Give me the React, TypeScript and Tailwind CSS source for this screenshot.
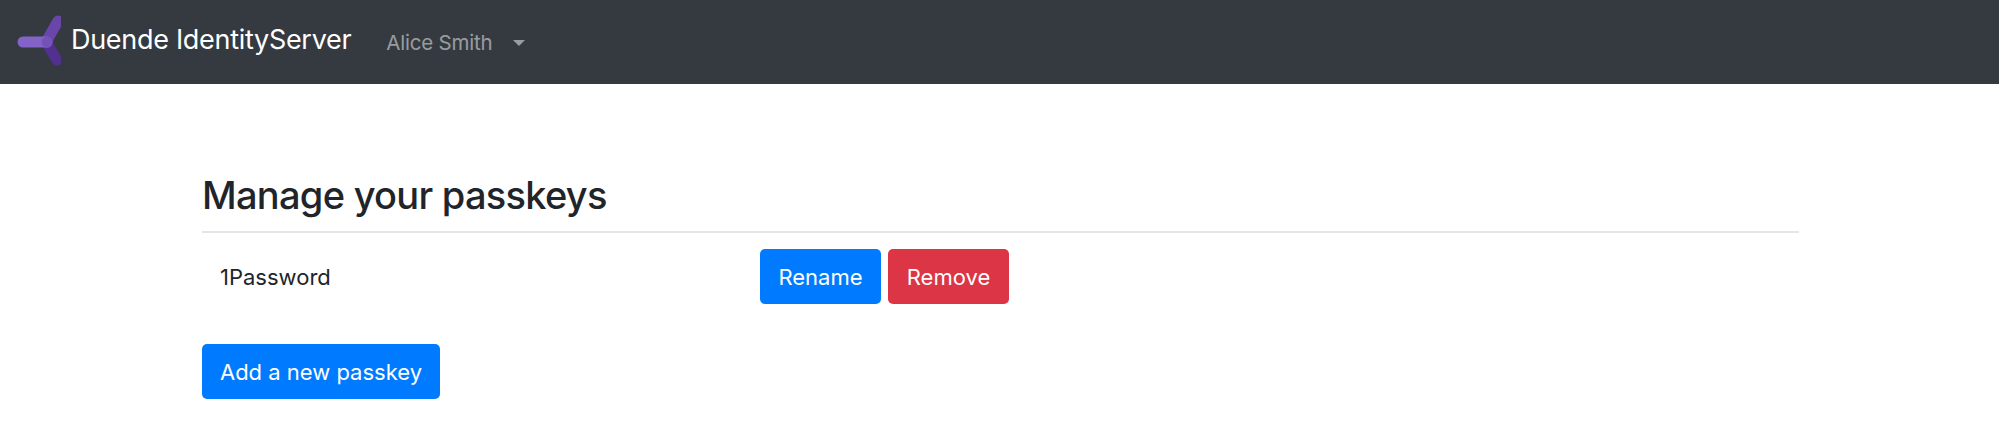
function Logo() {
  return (
    <svg width="44" height="54" viewBox="0 0 44 54" className="shrink-0" fill="none">
      <line x1="29" y1="27" x2="40" y2="45" stroke="#51308f" strokeWidth="11" strokeLinecap="round" />
      <line x1="29" y1="27" x2="41" y2="6" stroke="#6a45aa" strokeWidth="11" strokeLinecap="round" />
      <line x1="6" y1="27" x2="30" y2="27" stroke="#8463c8" strokeWidth="11" strokeLinecap="round" />
      <circle cx="30" cy="27" r="5.5" fill="#7453b8" />
    </svg>
  );
}

export default function App() {
  return (
    <div className="min-h-[445px] bg-white font-['Inter',sans-serif] text-[#212529]">
      {/* Navbar */}
      <nav className="flex h-[84px] items-center bg-[#343a40] pl-[17px]">
        <Logo />
        <span className="mb-[6px] ml-[10px] text-[27px] leading-none tracking-[-0.3px] text-white">Duende IdentityServer</span>
        <span className="ml-[35px] mt-[3px] text-[20.5px] leading-none tracking-[-0.2px] text-white/50">Alice Smith</span>
        <span className="ml-[20px] mt-[1px] h-0 w-0 border-x-[6.5px] border-t-[6.5px] border-x-transparent border-t-white/50" />
      </nav>

      {/* Page content */}
      <main className="mx-[202px] w-[1597px] pt-[88px]">
        <h2 className="border-b-2 border-[#e3e6e9] pb-[12px] text-[38px] leading-[47px] font-medium tracking-[-0.72px]">
          Manage your passkeys
        </h2>

        <div className="mt-[16px] flex items-center">
          <div className="w-[558px] pl-[18px] pt-[2px] text-[22px]">1Password</div>
          <div className="flex gap-[7px]">
            <button className="h-[55px] w-[121px] rounded-[5px] bg-[#007bff] pt-[1px] text-[22px] text-white">Rename</button>
            <button className="h-[55px] w-[121px] rounded-[5px] bg-[#dc3545] pt-[1px] text-[22px] text-white">Remove</button>
          </div>
        </div>

        <button className="mt-[40px] h-[55px] w-[238px] rounded-[5px] bg-[#007bff] pt-[1px] text-[22px] text-white">
          Add a new passkey
        </button>
      </main>
    </div>
  );
}
